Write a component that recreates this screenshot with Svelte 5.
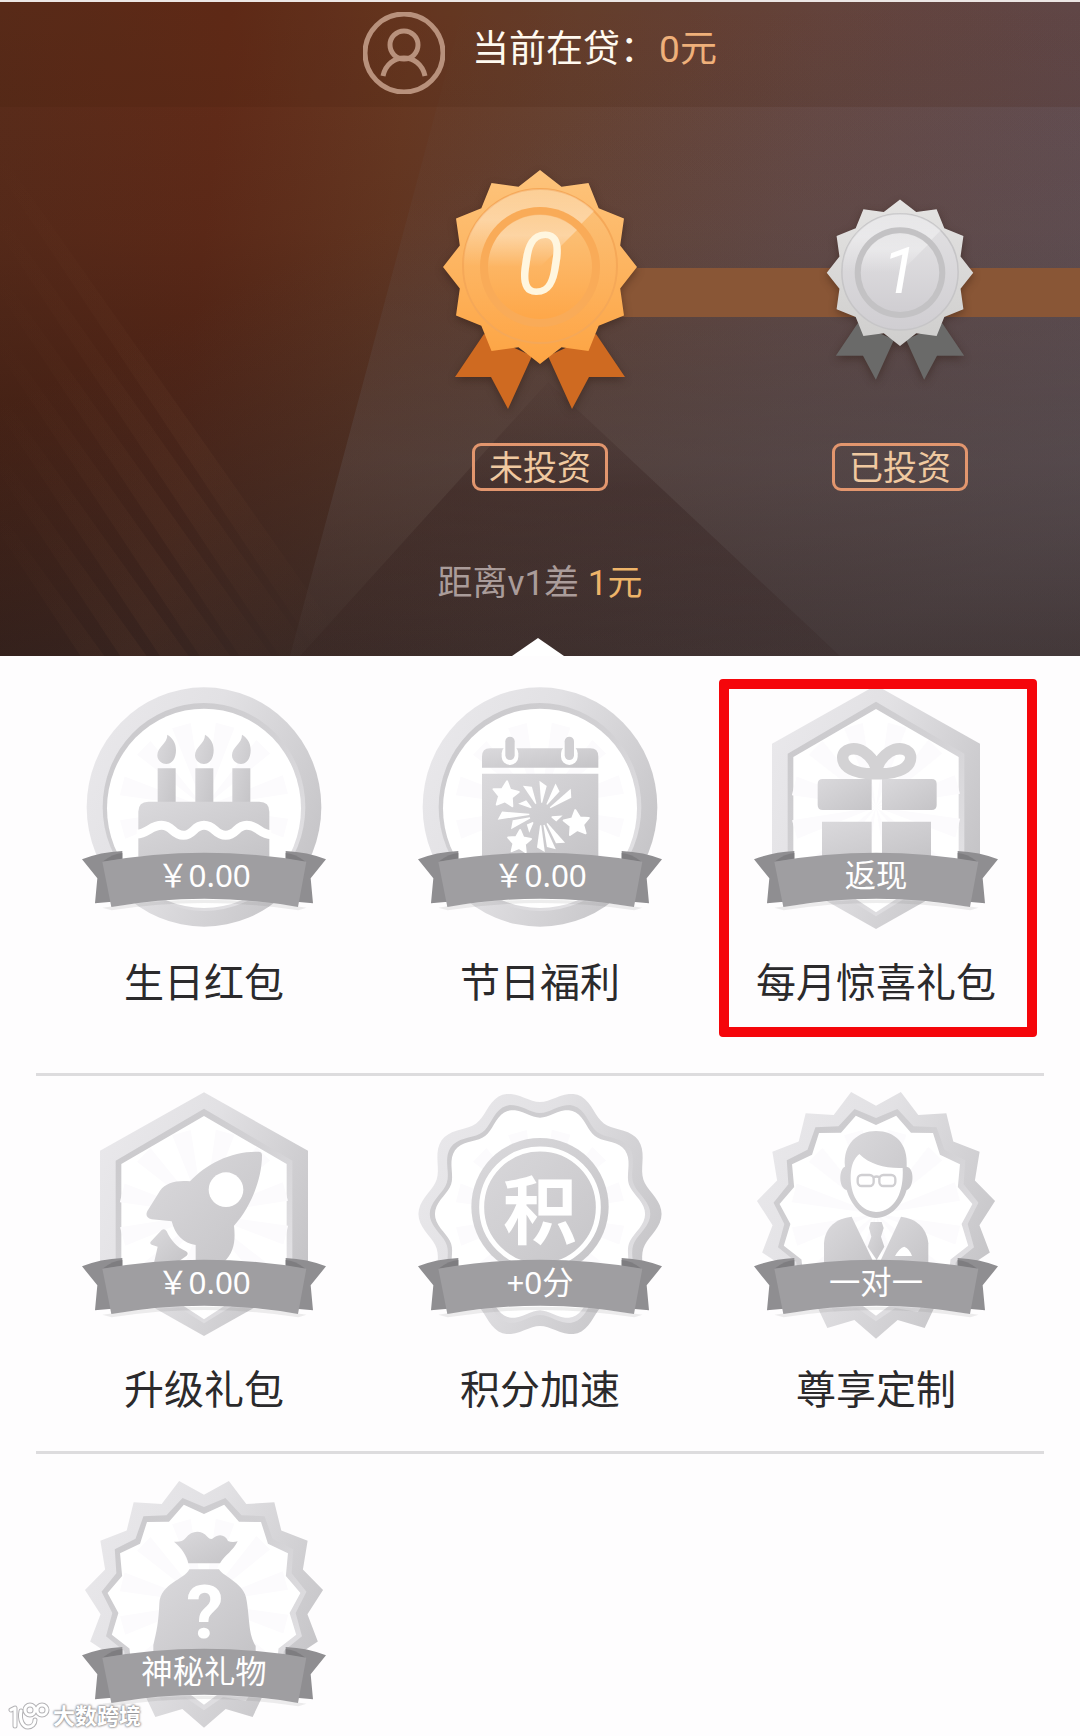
<script lang="ts">
  interface Perk {
    id: string;
    title: string;
    label: string;
    frame: 'circle' | 'hexagon' | 'scallop' | 'burst';
    marked?: boolean;
  }

  const levels = [
    { digit: '0', status: '未投资', tone: 'gold' },
    { digit: '1', status: '已投资', tone: 'silver' }
  ];

  const rows: Perk[][] = [
    [
      { id: 'birthday', title: '生日红包', label: '￥0.00', frame: 'circle' },
      { id: 'festival', title: '节日福利', label: '￥0.00', frame: 'circle' },
      { id: 'monthly', title: '每月惊喜礼包', label: '返现', frame: 'hexagon', marked: true }
    ],
    [
      { id: 'upgrade', title: '升级礼包', label: '￥0.00', frame: 'hexagon' },
      { id: 'points', title: '积分加速', label: '+0分', frame: 'scallop' },
      { id: 'custom', title: '尊享定制', label: '一对一', frame: 'burst' }
    ],
    [{ id: 'mystery', title: '', label: '神秘礼物', frame: 'burst' }]
  ];

  const rad = Math.PI / 180;

  function point(cx: number, cy: number, r: number, deg: number, squash = 1): string {
    const x = cx + r * squash * Math.sin(deg * rad);
    const y = cy - r * Math.cos(deg * rad);
    return `${x.toFixed(1)},${y.toFixed(1)}`;
  }

  // pointed star, tips on `outer`, valleys on `inner`
  function star(cx: number, cy: number, outer: number, inner: number, tips: number, turn = 0, squash = 1) {
    const step = 180 / tips;
    return Array.from({ length: tips * 2 }, (_, i) =>
      point(cx, cy, i % 2 ? inner : outer, turn + i * step, squash)
    ).join(' ');
  }

  function scallop(r: number, depth: number) {
    return Array.from({ length: 180 }, (_, i) =>
      point(366, 366, r + depth * Math.cos(10 * (i * 2 - 18) * rad), i * 2, 0.97)
    ).join(' ');
  }

  function hexagon(top: number, left: number, shoulder: number, foot: number, bottom: number) {
    const right = 732 - left;
    return `366,${top} ${right},${shoulder} ${right},${foot} 366,${bottom} ${left},${foot} ${left},${shoulder}`;
  }

  const frames = {
    hexagon: [
      hexagon(1, 54, 176, 556, 732),
      hexagon(50, 101, 206, 530, 694),
      hexagon(72, 118, 216, 520, 682)
    ],
    scallop: [scallop(356, 20), scallop(322, 19), scallop(307, 18)],
    burst: [
      star(366, 366, 374, 325, 15, 12, 0.96),
      star(366, 366, 322, 288, 15, 12, 0.96),
      star(366, 368, 303, 269, 15, 12, 0.96)
    ]
  };

  const rays = Array.from({ length: 12 }, (_, i) => {
    const a = i * 30 + 8;
    return `M366 366 L${point(366, 366, 255, a)} L${point(366, 366, 255, a + 13)} Z`;
  }).join(' ');

  // [angle, length] of each spark on the calendar
  const sparks = [
    [-25, 100], [5, 100], [33, 102], [56, 118], [-56, 74], [-92, 130],
    [-110, 100], [180, 115], [163, 115], [146, 113], [-138, 66], [105, 66]
  ].map(([a, l]) => {
    const w = 720 / l;
    return [
      point(422, 432, 34, a - 3),
      point(422, 432, l, a - w),
      point(422, 432, l - 14, a + w),
      point(422, 432, 34, a + 3)
    ].join(' ');
  });
</script>

<svg class="defs" aria-hidden="true">
  <defs>
    <linearGradient id="frame" x1="0" y1="0.2" x2="1" y2="0.7">
      <stop offset="0" stop-color="#e9e8eb" />
      <stop offset="0.4" stop-color="#e2e1e4" />
      <stop offset="1" stop-color="#c5c4c7" />
    </linearGradient>
    <linearGradient id="bevel" x1="0" y1="0" x2="0.9" y2="1">
      <stop offset="0" stop-color="#c9c8cb" />
      <stop offset="0.5" stop-color="#d2d1d4" />
      <stop offset="1" stop-color="#e6e5e8" />
    </linearGradient>
    <linearGradient id="icon" x1="0" y1="0" x2="1" y2="1">
      <stop offset="0" stop-color="#dad9dc" />
      <stop offset="1" stop-color="#c5c4c7" />
    </linearGradient>
    <linearGradient id="gold" x1="0" y1="0" x2="0" y2="1">
      <stop offset="0" stop-color="#fdc47c" />
      <stop offset="1" stop-color="#fda443" />
    </linearGradient>
    <linearGradient id="gold-disc" x1="0" y1="0" x2="0" y2="1">
      <stop offset="0" stop-color="#fbc37c" />
      <stop offset="1" stop-color="#fea749" />
    </linearGradient>
    <linearGradient id="silver" x1="0" y1="0" x2="0" y2="1">
      <stop offset="0" stop-color="#e4e3e2" />
      <stop offset="1" stop-color="#cfcecd" />
    </linearGradient>
    <linearGradient id="silver-disc" x1="0" y1="0" x2="0" y2="1">
      <stop offset="0" stop-color="#e2e1e3" />
      <stop offset="1" stop-color="#d0ced2" />
    </linearGradient>
    <linearGradient id="gloss" x1="0" y1="0" x2="0" y2="1">
      <stop offset="0" stop-color="#fff" stop-opacity="0.2" />
      <stop offset="0.4" stop-color="#fff" stop-opacity="0.35" />
      <stop offset="1" stop-color="#fff" stop-opacity="0" />
    </linearGradient>
  </defs>
</svg>

<div class="page">
  <section class="hero">
    <svg class="scene" viewBox="0 0 1080 654" preserveAspectRatio="none" aria-hidden="true">
      <defs>
        <linearGradient id="dusk" x1="0" y1="0" x2="0" y2="1">
          <stop offset="0" stop-color="#1f110e" stop-opacity="0" />
          <stop offset="0.35" stop-color="#1f110e" stop-opacity="0.14" />
          <stop offset="0.7" stop-color="#1f110e" stop-opacity="0.46" />
          <stop offset="1" stop-color="#1f110e" stop-opacity="0.78" />
        </linearGradient>
        <linearGradient id="beam" x1="0" y1="0" x2="0" y2="1">
          <stop offset="0" stop-color="#6a666b" stop-opacity="0" />
          <stop offset="0.35" stop-color="#6a666b" stop-opacity="0.1" />
          <stop offset="0.7" stop-color="#6a666b" stop-opacity="0.24" />
          <stop offset="1" stop-color="#6a666b" stop-opacity="0.06" />
        </linearGradient>
        <linearGradient id="haze" x1="0.5" y1="0.2" x2="1" y2="0.8">
          <stop offset="0" stop-color="#5c585c" stop-opacity="0" />
          <stop offset="1" stop-color="#5c585c" stop-opacity="0.4" />
        </linearGradient>
        <linearGradient id="peak" x1="0" y1="0" x2="0" y2="1">
          <stop offset="0" stop-color="#2a1413" stop-opacity="0.04" />
          <stop offset="0.4" stop-color="#2a1413" stop-opacity="0.28" />
          <stop offset="1" stop-color="#2a1413" stop-opacity="0.12" />
        </linearGradient>
        <linearGradient id="streak" x1="0" y1="0" x2="1" y2="1">
          <stop offset="0" stop-color="#8a5a3c" stop-opacity="0" />
          <stop offset="0.6" stop-color="#8a5a3c" stop-opacity="0.1" />
          <stop offset="1" stop-color="#8a5a3c" stop-opacity="0" />
        </linearGradient>
      </defs>
      <rect width="1080" height="654" fill="url(#dusk)" />
      <rect width="1080" height="654" fill="url(#haze)" />
      <path d="M465 0 H1080 V654 H290 Z" fill="url(#beam)" />
      <path d="M548 380 L840 654 H300 Z" fill="url(#peak)" />
      {#each [0, 1, 2, 3, 4, 5, 6] as i}
        <path d="M0 {150 + i * 60} L{330 - i * 20} {620 + i * 30} L{310 - i * 20} {640 + i * 30} L0 {172 + i * 60} Z" fill="url(#streak)" />
      {/each}
    </svg>

    <header class="account">
      <svg class="avatar" viewBox="0 0 82 82" aria-hidden="true">
        <circle cx="41" cy="41" r="39" />
        <circle cx="41" cy="33" r="14" />
        <path d="M20 64 C25 40 57 40 62 64" />
      </svg>
      <p class="loan"><span>当前在贷：</span><strong>0元</strong></p>
    </header>

    <ol class="levels">
      {#each levels as level}
        <li class="level {level.tone}">
          <div class="medal-box">
            <svg class="medal" viewBox="0 0 196 240" role="img" aria-label="v{level.digit}">
              <path class="tail" d="M42 164 L90 186 L66 239 L49 207 H13 Z" />
              <path class="tail" d="M154 164 L106 186 L130 239 L147 207 H183 Z" />
              <polygon points={star(98, 97, 97, 83, 12)} fill="url(#{level.tone})" />
              <circle class="rim" cx="98" cy="96" r="77" fill="url(#{level.tone}-disc)" />
              <path d="M21 96 A77 77 0 0 1 152 41 L98 96 Z" fill="url(#gloss)" />
              <circle class="groove" cx="98" cy="97" r="60" />
              <circle cx="98" cy="97" r="52" fill="url(#{level.tone}-disc)" />
              <path d="M46 97 A52 52 0 0 1 135 60 L98 97 Z" fill="url(#gloss)" />
              <text x="98" y="124" text-anchor="middle">{level.digit}</text>
            </svg>
          </div>
          <span class="status">{level.status}</span>
        </li>
      {/each}
    </ol>

    <p class="distance">距离v1差 <strong>1元</strong></p>
  </section>

  <main class="perks">
    {#each rows as row}
      <div class="row">
        {#each row as perk}
          <a class="perk" class:marked={perk.marked} href="#{perk.id}">
            <svg class="badge" viewBox="0 0 732 732">
              {#if perk.frame === 'circle'}
                <ellipse cx="366" cy="366" rx="352" ry="359" fill="url(#frame)" />
                <ellipse cx="366" cy="366" rx="304" ry="312" fill="url(#bevel)" />
                <ellipse cx="366" cy="370" rx="291" ry="299" fill="#fff" />
              {:else}
                <polygon points={frames[perk.frame][0]} fill="url(#frame)" />
                <polygon points={frames[perk.frame][1]} fill="url(#bevel)" />
                <polygon points={frames[perk.frame][2]} fill="#fff" />
              {/if}
              <path d={rays} fill="#fcfbfd" />

              {#if perk.id === 'birthday'}
                <g transform="translate(-66 -45)" fill="url(#icon)">
                  {#each [0, 113, 224] as x}
                    <path
                      transform="translate({x})"
                      d="M322 194 C322 222 292 230 292 256 C292 272 305 282 319 282 C336 282 348 266 348 240 C348 218 338 204 322 194 Z M293 295 H347 V400 H293 Z"
                    />
                  {/each}
                  <path d="M265 395 H598 Q628 395 628 425 V560 H235 V425 Q235 395 265 395 Z" />
                  <path
                    d="M230 492 C262 492 272 466 305 466 C338 466 338 496 370 496 C402 496 400 466 432 466 C465 466 465 496 497 496 C530 496 528 466 560 466 C595 466 600 494 634 494"
                    fill="none"
                    stroke="#fff"
                    stroke-width="27"
                  />
                </g>
              {:else if perk.id === 'festival'}
                <g transform="translate(-54 -45)" fill="url(#icon)">
                  <path d="M270 235 H571 Q595 235 595 260 V293 H246 V260 Q246 235 270 235 Z" />
                  <path d="M246 311 H595 V560 H246 Z" />
                  {#each [330, 508] as x}
                    <rect x={x - 25} y="225" width="50" height="60" rx="25" fill="#fff" />
                    <rect x={x - 14} y="200" width="28" height="70" rx="14" fill="#d0cfd2" />
                  {/each}
                  <g fill="#fff" stroke="#fff" stroke-linejoin="round" stroke-width="6">
                    <polygon points={star(317, 374, 40, 20, 5, 6)} />
                    <polygon points={star(530, 460, 40, 20, 5, -6)} />
                    <polygon points={star(358, 516, 36, 18, 5, 4)} />
                  </g>
                  {#each sparks as spark}
                    <polygon points={spark} fill="#fff" />
                  {/each}
                </g>
              {:else if perk.id === 'monthly'}
                <g transform="translate(-132 -45)" fill="url(#icon)">
                  <path d="M338 327 H485 V420 H338 Q323 420 323 405 V342 Q323 327 338 327 Z" />
                  <path d="M516 327 H665 Q680 327 680 342 V405 Q680 420 665 420 H516 Z" />
                  <path d="M336 455 H485 V560 H336 Z M516 455 H663 V560 H516 Z" />
                  <path
                    d="M500 311 C430 314 398 290 398 262 C398 236 434 228 462 246 C486 262 499 286 500 311 C501 286 514 262 538 246 C566 228 602 236 602 262 C602 290 570 314 500 311 Z"
                    fill="none"
                    stroke="#d3d2d4"
                    stroke-width="34"
                    stroke-linejoin="round"
                  />
                </g>
              {:else if perk.id === 'upgrade'}
                <g transform="translate(-66 -36)" fill="url(#icon)">
                  <path
                    d="M596 215 Q606 215 606 226 C606 300 570 385 522 437 C526 475 526 515 490 548 L407 560 V495 C370 490 345 465 335 424 L275 418 C258 414 256 402 264 390 L300 332 C318 308 350 300 390 304 C440 250 515 213 596 215 Z"
                  />
                  <circle cx="498" cy="329" r="52" fill="#fff" />
                  <path d="M305 450 Q314 444 320 454 C332 480 350 502 378 514 Q387 520 380 527 L350 548 H282 L293 500 L275 494 Q267 490 274 483 Z" />
                </g>
              {:else if perk.id === 'points'}
                <g transform="translate(-54 -36)">
                  <circle cx="420" cy="380" r="206" fill="url(#icon)" />
                  <circle cx="420" cy="382" r="175" fill="none" stroke="#fff" stroke-width="15" />
                  <text class="coin" x="420" y="475" text-anchor="middle">积</text>
                </g>
              {:else if perk.id === 'custom'}
                <g transform="translate(-72 -36)" fill="url(#icon)">
                  <path
                    d="M438 153 C495 153 535 190 530 260 C555 264 552 324 530 330 C518 372 482 414 438 414 C396 414 362 372 350 330 C325 324 326 266 345 260 C338 190 385 153 438 153 Z"
                  />
                  <path
                    d="M388 222 C420 254 468 266 518 264 C522 336 496 394 438 396 C384 392 360 340 362 285 C364 255 372 235 388 222 Z"
                    fill="#fff"
                  />
                  <g fill="none" stroke="#d0cfd2" stroke-width="7">
                    <rect x="383" y="285" width="48" height="33" rx="12" />
                    <rect x="448" y="285" width="48" height="33" rx="12" />
                    <path d="M431 292 Q440 287 448 292" />
                  </g>
                  <path d="M282 560 V490 C285 440 320 415 365 410 L430 545 V560 Z" />
                  <path d="M595 560 V490 C590 440 555 415 513 410 L450 545 V560 Z" />
                  <path d="M422 426 H455 L461 444 L453 470 L463 500 L440 540 L413 500 L424 470 L417 444 Z" />
                  <path d="M495 528 Q508 504 523 500 Q540 508 546 528 Z" fill="#fff" />
                </g>
              {:else if perk.id === 'mystery'}
                <g transform="translate(-246 -123)" fill="url(#icon)">
                  <path
                    d="M522 305 Q545 308 557 294 C575 270 605 270 622 290 Q632 302 640 294 C658 280 676 285 684 303 Q696 308 713 304 C700 332 675 345 660 370 H565 C560 345 545 325 522 305 Z"
                  />
                  <path
                    d="M568 388 H657 C672 412 735 430 740 482 C750 545 745 580 767 618 V640 H460 V615 C470 575 476 545 478 490 C482 430 552 420 568 388 Z"
                  />
                  <text class="mark" x="615" y="594" text-anchor="middle">?</text>
                </g>
              {/if}

              <g class="ribbon">
                <path d="M61 668 Q366 620 674 668 L649 676 Q366 632 89 676 Z" fill="#6b6a6d" fill-opacity="0.12" />
                {#each ['', 'translate(732) scale(-1 1)'] as flip}
                  <g transform={flip}>
                    <path d="M0 523 Q55 501 121 498 V540 L90 650 L39 655 L46 580 Z" fill="#8f8e91" />
                    <path d="M61 530 Q95 505 121 504 V522 Z" fill="#7e7d80" />
                  </g>
                {/each}
                <path d="M61 530 Q366 476 673 530 L648 666 Q366 616 88 666 Z" fill="#9f9ea1" />
              </g>
              <text class="label" x="366" y="606" text-anchor="middle">{perk.label}</text>
            </svg>
            {#if perk.title}
              <span class="title">{perk.title}</span>
            {/if}
          </a>
        {/each}
      </div>
    {/each}
  </main>

  <div class="watermark">
    <svg viewBox="0 0 42 30" aria-hidden="true">
      {#each ['edge', 'line'] as layer}
        <g class={layer}>
          <path d="M3 8 L7 6 V24" />
          <path d="M13 9 C11 18 15 25 20 25 C24 25 27 22 27 18" />
          <circle cx="22" cy="8" r="5" />
          <circle cx="34" cy="8" r="5" />
        </g>
      {/each}
    </svg>
    <span>大数跨境</span>
  </div>
</div>

<style>
  :global(body) {
    margin: 0;
    background: #fefdfe;
  }

  .defs {
    position: absolute;
    width: 0;
    height: 0;
  }

  .page {
    position: relative;
    overflow: hidden;
    border-top: 2px solid #ece6e4;
    font-family: Roboto, 'Noto Sans CJK SC', sans-serif;
  }

  p,
  ol {
    margin: 0;
    padding: 0;
    list-style: none;
  }

  strong {
    font-weight: 400;
  }

  .hero {
    position: relative;
    padding-bottom: 48px;
    background: linear-gradient(97deg, #5c2d1b 0%, #642c19 20%, #6b3a23 36%, #6b4331 50%, #6a4a45 72%, #664e54 100%);
  }

  .hero::after {
    content: '';
    position: absolute;
    bottom: 0;
    left: 50%;
    width: 52px;
    height: 18px;
    margin-left: -28px;
    background: #fff;
    clip-path: polygon(50% 0, 100% 100%, 0 100%);
  }

  .scene {
    position: absolute;
    inset: 0;
    width: 100%;
    height: 100%;
  }

  .account {
    position: relative;
    display: flex;
    justify-content: center;
    gap: 27px;
    padding: 10px 0 13px;
    background: rgba(70, 30, 12, 0.16);
  }

  .avatar {
    width: 82px;
    height: 82px;
    fill: none;
    stroke: #b8917c;
    stroke-width: 5;
  }

  .loan {
    display: flex;
    gap: 2px;
    color: #fffaf0;
    font-size: 37px;
    line-height: 76px;
  }

  .loan strong {
    color: #efb07a;
  }

  .levels {
    position: relative;
    display: grid;
    grid-template-columns: repeat(3, 1fr);
    padding-top: 63px;
  }

  .levels::before {
    content: '';
    position: absolute;
    top: 161px;
    left: 50%;
    right: 0;
    height: 49px;
    background: #895636;
  }

  .level {
    position: relative;
    display: flex;
    flex-direction: column;
    align-items: center;
    gap: 33px;
  }

  .level:first-child {
    grid-column-start: 2;
  }

  .medal-box {
    display: flex;
    align-items: center;
    height: 240px;
  }

  .medal {
    width: 196px;
    height: 240px;
    filter: drop-shadow(0 3px 4px rgba(40, 20, 10, 0.4));
  }

  .medal text {
    fill: #fff6df;
    font-size: 86px;
    font-style: italic;
  }

  .silver .medal {
    width: 148px;
    height: 182px;
  }

  .silver text {
    fill: #fff;
  }

  .gold .tail {
    fill: #cf6a21;
  }

  .silver .tail {
    fill: #6a6a69;
  }

  .rim {
    stroke-width: 2;
  }

  .gold .rim {
    stroke: #f5a858;
  }

  .silver .rim {
    stroke: #c6c5c7;
  }

  .gold .groove {
    fill: #f9ab58;
  }

  .silver .groove {
    fill: #c3c2c4;
  }

  .status {
    padding: 2px 14px 0;
    border: 3px solid #e2966e;
    border-radius: 9px;
    color: #f0c9a0;
    font-size: 34px;
    line-height: 40px;
  }

  .distance {
    position: relative;
    margin-top: 69px;
    color: #aa9c9a;
    font-size: 35px;
    line-height: 48px;
    text-align: center;
  }

  .distance strong {
    color: #eeb469;
  }

  .perks {
    padding: 0 36px;
  }

  .row {
    display: grid;
    grid-template-columns: repeat(3, 1fr);
    padding: 29px 0 61px;
    border-bottom: 3px solid #dddcde;
  }

  .row:nth-child(2) {
    padding: 16px 0 32px;
  }

  .row:last-child {
    padding: 27px 0 11px;
    border-bottom: 0;
  }

  .perk {
    position: relative;
    display: flex;
    flex-direction: column;
    align-items: center;
    gap: 27px;
    color: #2b2a2c;
    text-decoration: none;
  }

  .marked::after {
    content: '';
    position: absolute;
    inset: -6px 7px -25px 11px;
    border: 10px solid #f5060b;
    border-radius: 4px;
  }

  .badge {
    width: 244px;
    height: 244px;
    overflow: visible;
  }

  .badge text {
    fill: #fff;
  }

  .badge .label {
    font-family: 'Noto Sans', 'Noto Sans CJK SC', sans-serif;
    font-size: 94px;
  }

  .badge .coin {
    font-size: 222px;
    font-weight: 700;
  }

  .badge .mark {
    font-size: 225px;
    font-weight: 700;
  }

  .title {
    font-size: 40px;
    line-height: 56px;
    white-space: nowrap;
  }

  .watermark {
    position: absolute;
    bottom: 3px;
    left: 8px;
    display: flex;
    align-items: center;
    gap: 3px;
    color: #fff;
    font-size: 22px;
    font-weight: 700;
    line-height: 32px;
    text-shadow: 0 0 2px #8d8c8f, 0 0 2px #8d8c8f, 0 0 3px #a3a2a5;
  }

  .watermark svg {
    width: 42px;
    height: 30px;
    fill: none;
    stroke-linecap: round;
    stroke-linejoin: round;
  }

  .edge {
    stroke: #b4b3b6;
    stroke-width: 5;
  }

  .line {
    stroke: #fff;
    stroke-width: 3;
  }
</style>
